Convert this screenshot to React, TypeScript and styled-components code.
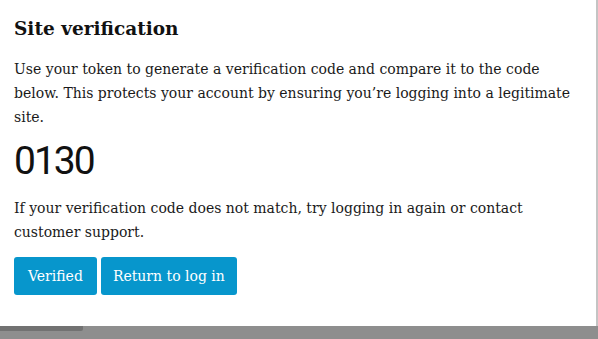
import React from "react";
import styled, { createGlobalStyle } from "styled-components";

const Global = createGlobalStyle`
  html, body { margin: 0; padding: 0; background: #8e8e8e; }
  body { width: 598px; height: 339px; overflow: hidden; }
`;

const Page = styled.div`
  display: flex;
  flex-direction: column;
  width: 598px;
  height: 339px;
`;

const Panel = styled.section`
  box-sizing: border-box;
  width: 598px;
  height: 326px;
  background: #ffffff;
  border-right: 2px solid #c4c4c4;
  padding: 15px 14px 0 14px;
  font-family: "DejaVu Serif", serif;
  color: #1a1a1a;
`;

const Title = styled.h1`
  margin: 0;
  font-size: 18.5px;
  line-height: 28px;
  font-weight: bold;
  color: #111;
`;

const Text = styled.p<{ $top?: number }>`
  margin: ${(p) => p.$top ?? 0}px 0 0 0;
  font-size: 14px;
  line-height: 24px;
  width: 570px;
`;

const Code = styled.div`
  margin-top: 9px;
  font-family: Roboto, "Noto Sans", sans-serif;
  font-size: 39px;
  letter-spacing: -2px;
  line-height: 46px;
  color: #111;
`;

const Actions = styled.div`
  display: flex;
  gap: 4px;
  margin-top: 13px;
`;

const Button = styled.button<{ $pad?: number }>`
  height: 38px;
  padding: 0 ${(p) => p.$pad ?? 14}px;
  border: none;
  border-radius: 3px;
  background: #0796cc;
  color: #fff;
  font-family: "DejaVu Serif", serif;
  font-size: 14px;
`;

const Footer = styled.div`
  flex: 1;
`;

const Tab = styled.div`
  width: 83px;
  height: 5px;
  background: #727272;
  border-bottom-right-radius: 2px;
`;

export default function App() {
  return (
    <Page>
      <Global />
      <Panel>
        <Title>Site verification</Title>
        <Text $top={14}>
          Use your token to generate a verification code and compare it to the code
          below. This protects your account by ensuring you’re logging into a legitimate
          site.
        </Text>
        <Code>0130</Code>
        <Text $top={12}>
          If your verification code does not match, try logging in again or contact
          customer support.
        </Text>
        <Actions>
          <Button>Verified</Button>
          <Button $pad={12}>Return to log in</Button>
        </Actions>
      </Panel>
      <Footer>
        <Tab />
      </Footer>
    </Page>
  );
}
